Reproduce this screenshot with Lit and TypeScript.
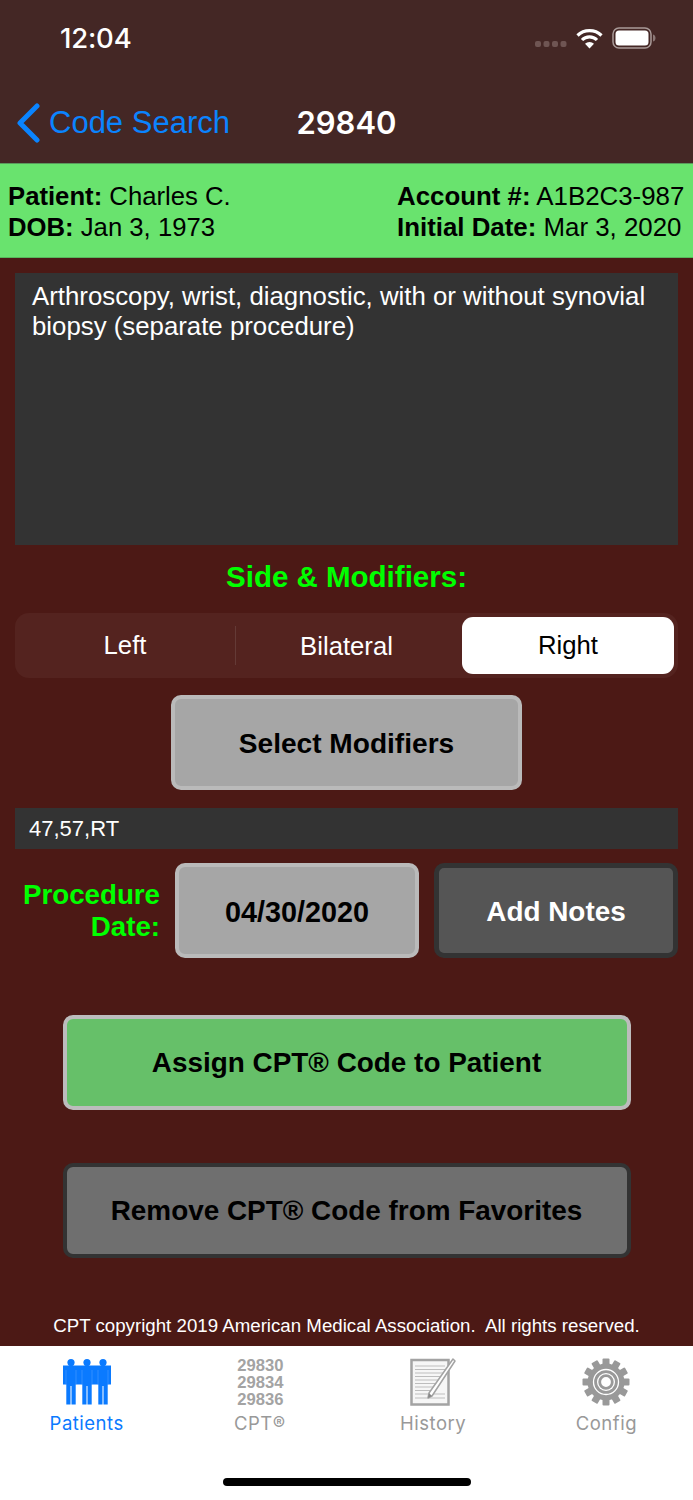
import { LitElement, html, css, svg } from "lit";
import { customElement } from "lit/decorators.js";

const gearTeeth = Array.from({ length: 12 }, (_, i) => svg`<rect x="20.5" y="0.5" width="7" height="9" rx="1" transform="rotate(${i * 30} 24 24)"/>`);

@customElement("app-root")
export class AppRoot extends LitElement {
  static styles = css`
    :host { display: block; width: 693px; height: 1500px; font-family: "Liberation Sans", Arial, sans-serif; background: #4c1915; overflow: hidden; }
    * { box-sizing: border-box; }
    .page { display: flex; flex-direction: column; height: 1500px; }
    .top { height: 163px; background: #442725; display: flex; flex-direction: column; color: #fff; flex: none; }
    .status { height: 76px; display: flex; align-items: center; justify-content: space-between; padding: 0 37px 0 60px; }
    .time { font-size: 27.5px; font-weight: 500; font-family: Inter, "Liberation Sans", sans-serif; letter-spacing: -0.2px; }
    .sicons { display: flex; align-items: center; gap: 9px; }
    .nav { height: 87px; display: grid; grid-template-columns: 1fr auto 1fr; align-items: center; padding-top: 6px; }
    .back { display: flex; align-items: center; gap: 8px; color: #0a84ff; font-size: 31px; padding-left: 16px; }
    .title { font-size: 31px; font-family: Inter, "Liberation Sans", sans-serif; font-weight: 600; }
    .info { height: 95px; flex: none; background: #69e36e; border-top: 1px solid #5a9a5c; border-bottom: 1px solid #56b85a; display: flex; justify-content: space-between; padding: 17px 8px 0; color: #000; font-size: 25.7px; line-height: 31px; }
    .info b { font-weight: 700; }
    .right-col { width: 288px; white-space: nowrap; font-size: 25.85px; }
    .main { flex: 1; display: flex; flex-direction: column; padding: 15px 15px 0; align-items: stretch; }
    .desc { height: 272px; background: #333; color: #fff; font-size: 25.8px; line-height: 30px; padding: 8px 17px; }
    .heading { color: #0f0; font-size: 29.5px; font-weight: 700; text-align: center; margin-top: 15px; line-height: 34px; }
    .seg { margin-top: 19px; height: 65px; background: #54231f; border-radius: 14px; display: grid; grid-template-columns: 1fr 1fr 1fr; align-items: stretch; color: #fff; font-size: 25.7px; }
    .seg div { display: flex; align-items: center; justify-content: center; padding-top: 2px; }
    .seg .l { border-right: 1px solid #643a36; margin: 13px 0; padding-top: 0; }
    .seg .sel { background: #fff; color: #000; border-radius: 11px; margin: 4px 4px 4px 5px; padding-top: 0; }
    .btn { border-radius: 10px; display: flex; align-items: center; justify-content: center; font-weight: 700; font-size: 27.9px; color: #000; border: 4px solid #bababa; background: #a6a6a6; padding-top: 3px; }
    .select { width: 351px; height: 95px; margin: 17px auto 0; font-size: 28.1px; }
    .mods { margin-top: 18px; height: 41px; background: #333; color: #fff; font-size: 22px; display: flex; align-items: center; padding-left: 14px; }
    .daterow { margin-top: 14px; display: flex; align-items: stretch; height: 95px; }
    .dlabel { width: 145px; color: #0f0; font-size: 27.7px; font-weight: 700; text-align: right; line-height: 32px; display: flex; align-items: center; flex: none; }
    .date { width: 244px; margin-left: 15px; font-size: 28.8px; }
    .notes { width: 244px; margin-left: 15px; background: #555; color: #fff; border-color: #333; border-width: 5px; }
    .assign { width: 568px; height: 95px; margin: 57px auto 0; background: #66c069; border-color: #bcbcbc; padding-top: 1px; }
    .remove { width: 568px; height: 95px; margin: 53px auto 0; background: #6f6f6f; border-color: #333; padding-top: 1px; }
    .copy { margin-top: auto; color: #fff; text-align: center; font-size: 18.7px; height: 31px; line-height: 22px; white-space: nowrap; }
    .tabs { height: 154px; flex: none; background: #fff; position: relative; display: grid; grid-template-columns: repeat(4, 173.25px); padding-top: 11px; }
    .tab { display: flex; flex-direction: column; align-items: center; color: #999; font-size: 18.5px; font-family: Inter, "Liberation Sans", sans-serif; letter-spacing: 0.5px; }
    .tab.on { color: #0a7aff; }
    .icon { height: 50px; display: flex; align-items: center; justify-content: center; }
    .tab span { margin-top: 4px; line-height: 24px; }
    .codes { font-family: "Liberation Sans", sans-serif; font-size: 16.6px; font-weight: 700; line-height: 17px; color: #a3a3a3; text-align: center; letter-spacing: 0; padding-left: 1px; }
    .home { position: absolute; left: 223px; top: 132px; width: 248px; height: 8px; border-radius: 4px; background: #000; }
  `;

  render() {
    const person = (x: number) => svg`<g transform="translate(${x} 0)">
      <circle cx="8" cy="3.6" r="3.6"/><path d="M0 6.500h16v19h-3.300V45.500H8.500V27H7.500V45.500H3.300V25.500H0z"/>
      <path d="M3 11v14.500M13 11v14.500" stroke="#5aa6ff" stroke-width=".5" fill="none"/></g>`;
    return html`<div class="page">
      <div class="top">
        <div class="status">
          <div class="time">12:04</div>
          <div class="sicons">
            <svg width="32" height="12" viewBox="0 0 32 12" style="margin-top:12px"><g fill="#6f5553"><rect x="0" y="3" width="6" height="6" rx="2"/><rect x="8.500" y="3" width="6" height="6" rx="2"/><rect x="17" y="3" width="6" height="6" rx="2"/><rect x="25.500" y="3" width="6" height="6" rx="2"/></g></svg>
            <svg width="27" height="21" viewBox="0 0 27 21" fill="none" stroke="#fff" stroke-width="3.200"><path d="M1.500 7.500a17 17 0 0 1 24 0"/><path d="M6 12a10.500 10.500 0 0 1 15 0"/><path d="M13.500 20.500l-4.500-4.700a6.400 6.400 0 0 1 9 0z" fill="#fff" stroke="none"/></svg>
            <svg width="44" height="22" viewBox="0 0 44 22"><rect x="1" y="1" width="38" height="20" rx="6" fill="none" stroke="#a99a98" stroke-width="1.500"/><rect x="3.500" y="3.500" width="33" height="15" rx="3.500" fill="#fff"/><path d="M41 7.500c2 .5 2.500 2 2.500 3.500s-.5 3-2.500 3.500z" fill="#8b7876"/></svg>
          </div>
        </div>
        <div class="nav">
          <div class="back"><svg width="25" height="40" viewBox="0 0 25 40" fill="none" stroke="#0a84ff" stroke-width="5" stroke-linecap="round" stroke-linejoin="round"><path d="M21 3L4 20l17 17"/></svg>Code Search</div>
          <div class="title">29840</div>
          <div></div>
        </div>
      </div>
      <div class="info">
        <div><b>Patient:</b> Charles C.<br /><b>DOB:</b> Jan 3, 1973</div>
        <div class="right-col"><b>Account #:</b> A1B2C3-987<br /><b>Initial Date:</b> Mar 3, 2020</div>
      </div>
      <div class="main">
        <div class="desc">Arthroscopy, wrist, diagnostic, with or without synovial biopsy (separate procedure)</div>
        <div class="heading">Side &amp; Modifiers:</div>
        <div class="seg"><div class="l">Left</div><div>Bilateral</div><div class="sel">Right</div></div>
        <div class="btn select">Select Modifiers</div>
        <div class="mods">47,57,RT</div>
        <div class="daterow">
          <div class="dlabel">Procedure Date:</div>
          <div class="btn date">04/30/2020</div>
          <div class="btn notes">Add Notes</div>
        </div>
        <div class="btn assign">Assign CPT® Code to Patient</div>
        <div class="btn remove">Remove CPT® Code from Favorites</div>
        <div class="copy">CPT copyright 2019 American Medical Association.&nbsp; All rights reserved.</div>
      </div>
      <div class="tabs">
        <div class="tab on"><div class="icon"><svg width="48" height="46" viewBox="0 0 48 46" fill="#0a7aff">${person(0)}${person(16)}${person(32)}</svg></div><span>Patients</span></div>
        <div class="tab"><div class="icon codes">29830<br />29834<br />29836</div><span>CPT®</span></div>
        <div class="tab"><div class="icon"><svg width="46" height="50" viewBox="0 0 46 50"><rect x="1.500" y="3" width="37" height="44.500" fill="#f6f6f6" stroke="#a3a3a3" stroke-width="2.500"/><g stroke="#bdbdbd" stroke-width="1.200"><path d="M5 9h30M5 12.500h30M5 16h30M5 19.500h30M5 23h28M5 26.500h26M5 30h22M5 33.500h20M5 37h30M5 41h30"/></g><path d="M43 2l2 2L22 39l-4 2 1-5z" fill="#fff" stroke="#a3a3a3" stroke-width="1.500" stroke-linejoin="round"/><path d="M18 41l1-5 3 3z" fill="#888"/></svg></div><span>History</span></div>
        <div class="tab"><div class="icon"><svg width="48" height="48" viewBox="0 0 48 48" fill="#999">${gearTeeth}<circle cx="24" cy="24" r="18.500"/><circle cx="24" cy="24" r="12.500" fill="none" stroke="#fff" stroke-width="1.300"/><circle cx="24" cy="24" r="9" fill="#fff"/><circle cx="24" cy="24" r="6.300" fill="none" stroke="#999" stroke-width="2.800"/></svg></div><span>Config</span></div>
        <div class="home"></div>
      </div>
    </div>`;
  }
}
